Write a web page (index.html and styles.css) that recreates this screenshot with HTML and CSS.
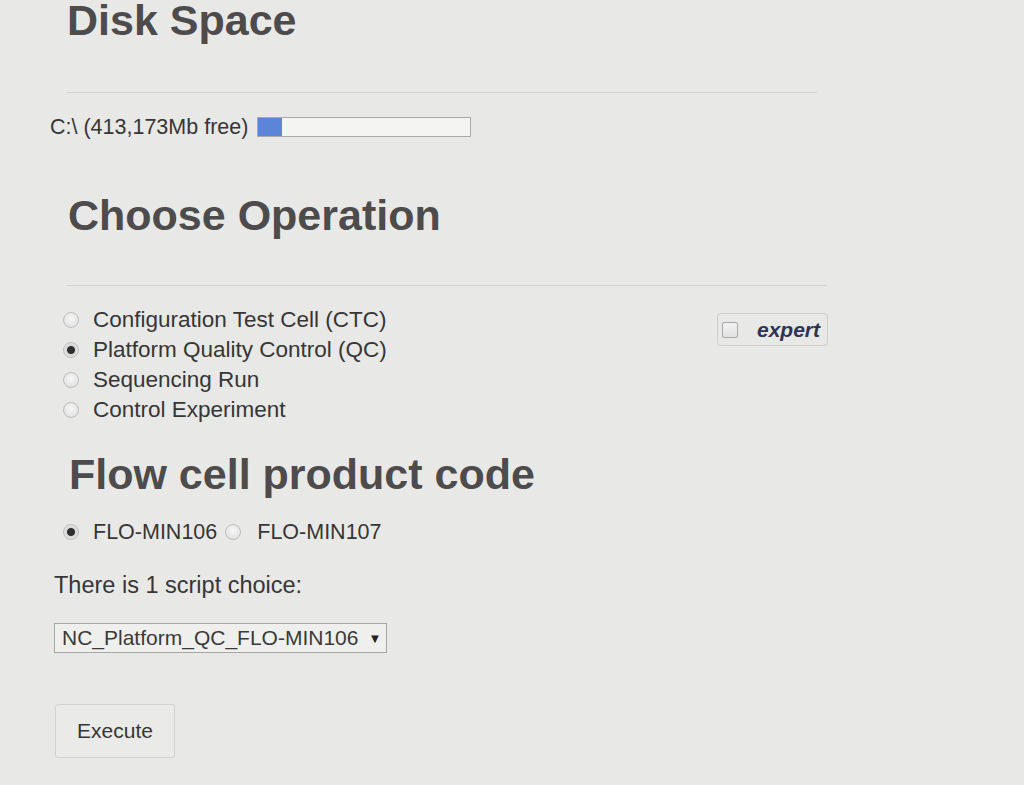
FILE: index.html
```html
<!DOCTYPE html>
<html>
<head>
<meta charset="utf-8">
<link rel="stylesheet" href="styles.css">
</head>
<body>
<div class="page">
  <h1 class="title t-disk">Disk Space</h1>
  <hr class="rule">
  <div class="disk-row">
    <span class="disk-label">C:\ (413,173Mb free)</span>
    <span class="bar"><span class="bar-fill" style="width:11%"></span></span>
  </div>

  <h1 class="title t-op">Choose Operation</h1>
  <hr class="rule rule-op">
  <div class="op-section">
    <div class="radio-list">
      <label class="radio-row"><input type="radio" name="op" class="radio"><span>Configuration Test Cell (CTC)</span></label>
      <label class="radio-row"><input type="radio" name="op" class="radio" checked><span>Platform Quality Control (QC)</span></label>
      <label class="radio-row"><input type="radio" name="op" class="radio"><span>Sequencing Run</span></label>
      <label class="radio-row"><input type="radio" name="op" class="radio"><span>Control Experiment</span></label>
    </div>
    <label class="expert"><input type="checkbox" class="check"><span class="expert-text">expert</span></label>
  </div>

  <h1 class="title t-flow">Flow cell product code</h1>
  <div class="flow-row">
    <label class="radio-row small"><input type="radio" name="fc" class="radio" checked><span>FLO-MIN106</span></label>
    <label class="radio-row small second"><input type="radio" name="fc" class="radio"><span>FLO-MIN107</span></label>
  </div>

  <p class="choice">There is 1 script choice:</p>
  <div class="select"><span>NC_Platform_QC_FLO-MIN106</span><span class="arrow">▼</span></div>

  <button class="execute">Execute</button>
</div>
</body>
</html>
```

FILE: styles.css
```css
html, body {
  margin: 0;
  padding: 0;
  background: #e8e8e6;
  height: 100%;
  overflow: hidden;
}
.page {
  padding-left: 50px;
  padding-top: 1px;
  font-family: "Liberation Sans", Arial, sans-serif;
  color: #363636;
}
.title {
  margin: 0;
  font-size: 43px;
  line-height: 48px;
  font-weight: bold;
  color: #4d4b4b;
}
.t-disk { margin-top: -1px; margin-left: 17px; line-height: 40px; }
.t-op { margin-top: 54px; margin-left: 18px; }
.t-flow { margin-top: 25px; margin-left: 19px; }
.rule {
  border: 0;
  height: 1px;
  background: #d4d4d2;
  margin: 52px 0 0 17px;
  width: 750px;
}
.rule-op { margin-top: 46px; width: 760px; }
.disk-row {
  display: flex;
  align-items: center;
  margin-top: 24px;
  height: 20px;
  font-size: 21.5px;
}
.disk-label { margin-right: 9px; }
.bar {
  width: 212px;
  height: 18px;
  border: 1px solid #a9a9a9;
  background: #f4f4f2;
  display: flex;
}
.bar-fill {
  background: #5b86d8;
  height: 100%;
}
.op-section {
  display: flex;
  margin-top: 19px;
  width: 778px;
}
.radio-list {
  display: flex;
  flex-direction: column;
}
.radio-row {
  display: flex;
  align-items: center;
  height: 30px;
  font-size: 22.5px;
  color: #363636;
}
.radio-row.small { font-size: 21.5px; }
.radio {
  appearance: none;
  -webkit-appearance: none;
  width: 16px;
  height: 16px;
  margin: 0 14px 0 13px;
  border-radius: 50%;
  border: 1px solid #bdbdbd;
  background: radial-gradient(circle at 50% 40%, #f6f6f6 0%, #dcdcdc 100%);
  box-sizing: border-box;
}
.radio:checked {
  background: radial-gradient(circle, #2e2e2e 0 3.5px, #d8d8d8 4.5px, #ececec 100%);
}
.expert {
  margin-left: auto;
  margin-top: 8px;
  align-self: flex-start;
  display: flex;
  align-items: center;
  height: 31px;
  width: 109px;
  border: 1px solid #cfcfcd;
  border-radius: 4px;
}
.check {
  appearance: none;
  -webkit-appearance: none;
  width: 16px;
  height: 16px;
  margin: 0 0 0 4px;
  border: 1px solid #a8a8a8;
  border-radius: 2px;
  background: linear-gradient(#f2f2f2, #e0e0e0);
  box-sizing: border-box;
}
.expert-text {
  margin-left: 19px;
  font-style: italic;
  font-weight: bold;
  font-size: 21px;
  color: #2f3450;
}
.flow-row {
  display: flex;
  margin-top: 19px;
}
.flow-row .second .radio { margin-left: 8px; margin-right: 16px; }
.choice {
  margin: 25px 0 0 4px;
  font-size: 23.5px;
  line-height: 26px;
  color: #363636;
}
.select {
  margin: 25px 0 0 4px;
  width: 324px;
  height: 28px;
  border: 1px solid #a6a6a6;
  background: #efefed;
  display: flex;
  align-items: center;
  padding-left: 7px;
  font-size: 21px;
  color: #3a3a3a;
}
.arrow {
  font-size: 13px;
  margin-left: 10px;
  color: #222;
}
.execute {
  display: block;
  margin: 51px 0 0 5px;
  width: 120px;
  height: 54px;
  border: 1px solid #d2d2d0;
  border-radius: 3px;
  background: #eaeae8;
  font-family: "Liberation Sans", Arial, sans-serif;
  font-size: 21px;
  color: #363636;
}
```
